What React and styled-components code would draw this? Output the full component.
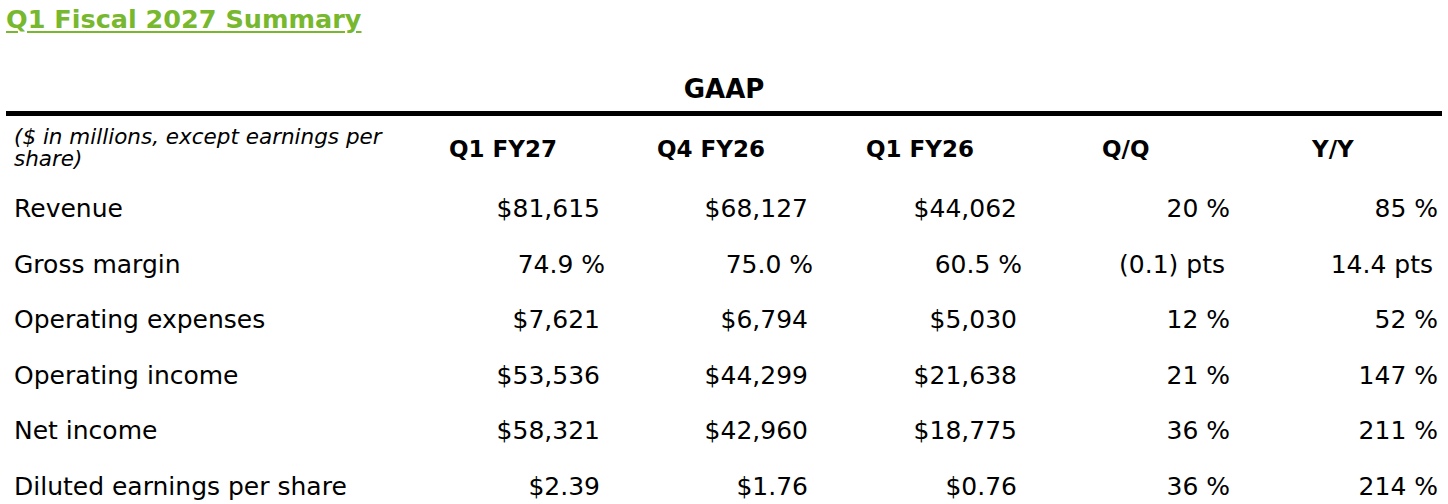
import React from "react";
import styled, { createGlobalStyle } from "styled-components";

const Global = createGlobalStyle`
  html, body { margin: 0; padding: 0; background: #fff; }
  body { font-family: "DejaVu Sans", Inter, "Liberation Sans", sans-serif; color: #000; }
`;

const Page = styled.div`
  padding: 0 6px;
  width: 1436px;
`;

const Title = styled.h2`
  margin: 0;
  padding-top: 4px;
  font-size: 25.5px;
  line-height: 30px;
  font-weight: 700;
  color: #77b82e;
  text-decoration: underline;
  text-underline-offset: 3px;
  text-decoration-thickness: 2px;
`;

const GroupHead = styled.div`
  margin-top: 34px;
  height: 42px;
  display: flex;
  align-items: center;
  justify-content: center;
  font-size: 26px;
  font-weight: 700;
  border-bottom: 5px solid #000;
  padding-bottom: 1px;
`;

const Grid = styled.div`
  display: grid;
  grid-template-columns: 430px 209px 209px 209px 209px 1fr;
`;

const LabelHead = styled.div`
  padding: 10px 8px 11px 8px;
  font-size: 21.5px;
  line-height: 22px;
  font-style: italic;
  width: 390px;
`;

const ColHead = styled.div`
  display: flex;
  align-items: center;
  padding-left: ${(p) => p.$pad}px;
  font-size: 23px;
  font-weight: 700;
`;

const Label = styled.div`
  padding: 14px 8px;
  font-size: 25px;
  line-height: 27.6px;
  white-space: nowrap;
`;

const Value = styled.div`
  padding: 14px ${(p) => p.$pad}px 14px 0;
  font-size: 25px;
  line-height: 27.6px;
  text-align: right;
  white-space: nowrap;
`;

const cols = [
  { head: "Q1 FY27", hpad: 13, vpad: 45 },
  { head: "Q4 FY26", hpad: 12, vpad: 46 },
  { head: "Q1 FY26", hpad: 12, vpad: 46 },
  { head: "Q/Q", hpad: 39, vpad: 42 },
  { head: "Y/Y", hpad: 40, vpad: 4 },
];

const rows = [
  { label: "Revenue", vals: ["$81,615", "$68,127", "$44,062", "20 %", "85 %"] },
  { label: "Gross margin", vals: ["74.9 %", "75.0 %", "60.5 %", "(0.1) pts", "14.4 pts"], pct: true },
  { label: "Operating expenses", vals: ["$7,621", "$6,794", "$5,030", "12 %", "52 %"] },
  { label: "Operating income", vals: ["$53,536", "$44,299", "$21,638", "21 %", "147 %"] },
  { label: "Net income", vals: ["$58,321", "$42,960", "$18,775", "36 %", "211 %"] },
  { label: "Diluted earnings per share", vals: ["$2.39", "$1.76", "$0.76", "36 %", "214 %"] },
];

export default function App() {
  return (
    <Page>
      <Global />
      <Title>Q1 Fiscal 2027 Summary</Title>
      <GroupHead>GAAP</GroupHead>
      <Grid>
        <LabelHead>($ in millions, except earnings per share)</LabelHead>
        {cols.map((c) => (
          <ColHead key={c.head} $pad={c.hpad}>{c.head}</ColHead>
        ))}
        {rows.map((r) => (
          <React.Fragment key={r.label}>
            <Label>{r.label}</Label>
            {r.vals.map((v, i) => {
              const shift = r.pct ? (i < 3 ? -5 : 5) : 0;
              return (
                <Value key={i} $pad={cols[i].vpad + shift}>{v}</Value>
              );
            })}
          </React.Fragment>
        ))}
      </Grid>
    </Page>
  );
}
